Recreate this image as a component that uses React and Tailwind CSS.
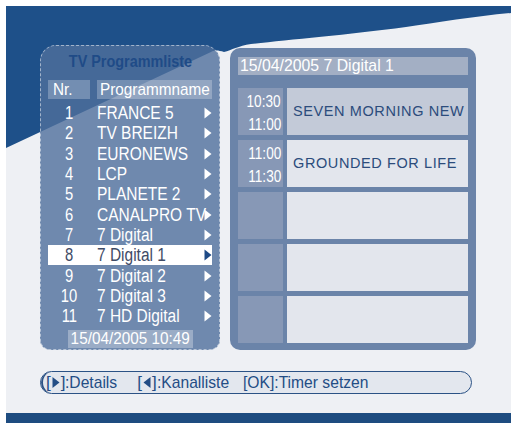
import React from 'react';

const channels = [
  'FRANCE 5', 'TV BREIZH', 'EURONEWS', 'LCP', 'PLANETE 2', 'CANALPRO TV',
  '7 Digital', '7 Digital 1', '7 Digital 2', '7 Digital 3', '7 HD Digital',
];

const events = [
  { from: '10:30', to: '11:00', title: 'SEVEN MORNING NEW', active: true },
  { from: '11:00', to: '11:30', title: 'GROUNDED FOR LIFE' },
  {}, {}, {},
];

// the box font is a narrow grotesk, so squeeze Liberation Sans horizontally
const Sq = ({ s = 'scale-x-[0.86]', o = 'origin-left', children }) => (
  <span className={`inline-block whitespace-nowrap ${s} ${o}`}>{children}</span>
);

const Tri = ({ dir = 'right', className }) => (
  <svg viewBox="0 0 8 12" className={className}>
    {dir === 'right'
      ? <path d="M0.5 0.5 L7.5 6 L0.5 11.5 Z" fill="currentColor" />
      : <path d="M7.5 0.5 L0.5 6 L7.5 11.5 Z" fill="currentColor" />}
  </svg>
);

const ChannelList = () => (
  <div className="w-[180px] h-[305px] shrink-0 flex flex-col bg-[#4f6f9c]/80 border border-dashed border-white/50 rounded-t-[16px] rounded-b-[10px] px-[7px]">
    <div className="h-[27px] pt-[6px] flex justify-center text-[16px] font-bold leading-[20px] text-[#1f4b87]">
      <Sq s="scale-x-[0.9]" o="origin-center">TV Programmliste</Sq>
    </div>
    <div className="flex gap-[7px] h-[19px] mt-[7px] text-[17px] leading-[19px] text-white">
      <div className="w-[42px] bg-white/25 pl-[5px]"><Sq s="scale-x-[0.9]">Nr.</Sq></div>
      <div className="w-[115px] bg-white/25 pl-[3px]"><Sq s="scale-x-[0.9]">Programmname</Sq></div>
    </div>
    <div className="mt-[4px]">
      {channels.map((name, i) => {
        const sel = i === 7;
        return (
          <div
            key={name}
            className={`flex items-center h-[20.3px] text-[18px] leading-[20px] ${sel ? 'bg-white text-[#3f4b66]' : 'text-white'}`}
          >
            <div className="w-[42px] shrink-0 flex justify-center">
              <Sq s="scale-x-[0.82]" o="origin-center">{i + 1}</Sq>
            </div>
            <div className="ml-[7px] w-[107px] shrink-0">
              <Sq>{name}</Sq>
            </div>
            <Tri className={`w-[8px] h-[12px] shrink-0 ${sel ? 'text-[#1e4a86]' : 'text-white'}`} />
          </div>
        );
      })}
    </div>
    <div className="mt-[4px] ml-[20px] w-[125px] h-[18px] bg-white/30 text-white text-[17px] leading-[18px] flex justify-center">
      <Sq s="scale-x-[0.9]" o="origin-center">15/04/2005 10:49</Sq>
    </div>
  </div>
);

const Schedule = () => (
  <div className="w-[246px] h-[302px] mt-[3px] shrink-0 bg-[#6b84a9] rounded-[10px] px-[8px] pt-[9px] pb-[7px] flex flex-col">
    <div className="h-[18px] bg-[#a3afc4] text-white text-[17px] leading-[18px] pl-[2px]">
      <Sq s="scale-x-[0.93]">15/04/2005 7 Digital 1</Sq>
    </div>
    <div className="mt-[13px] flex flex-col gap-[5px]">
      {events.map((ev, i) => (
        <div key={i} className="flex gap-[4px] h-[47px]">
          <div className="w-[45px] bg-[#8798b6] flex flex-col items-end justify-between pr-[2px] pt-[5px] pb-[1px] text-white text-[17px] leading-[18px]">
            <Sq s="scale-x-[0.8]" o="origin-right">{ev.from}</Sq>
            <Sq s="scale-x-[0.8]" o="origin-right">{ev.to}</Sq>
          </div>
          <div
            className={`w-[181px] flex items-center pl-[6px] text-[14.5px] tracking-[0.6px] text-[#2c4c7c] ${ev.active ? 'bg-[#c3cad8]' : 'bg-[#e3e6ed]'}`}
          >
            {ev.title}
          </div>
        </div>
      ))}
    </div>
  </div>
);

const Footer = () => (
  <div className="mt-[21px] w-[432px] h-[23px] rounded-full border-[1.5px] border-[#2b5285] bg-[#e3e7ee] shadow-[inset_3px_0_0_-1px_#2b5285] flex items-center pl-[5px] text-[17px] text-[#234d85] leading-[20px] whitespace-nowrap">
    <span className="flex items-center">
      [<Tri className="w-[8px] h-[13px] mx-[1px]" />]<Sq s="scale-x-[0.92]">:Details</Sq>
    </span>
    <span className="flex items-center ml-[15px]">
      [<Tri dir="left" className="w-[8px] h-[13px] mx-[1px]" />]<Sq s="scale-x-[0.92]">:Kanalliste</Sq>
    </span>
    <span className="ml-[8px]">
      <Sq s="scale-x-[0.92]">[OK]:Timer setzen</Sq>
    </span>
  </div>
);

export default function App() {
  return (
    <div className="w-[515px] h-[423px] bg-white pl-[6px] pt-[6px] pr-[4px] overflow-hidden font-['Liberation_Sans',sans-serif]">
      <div className="relative w-full h-full bg-[#eef0f4] flex flex-col">
        <svg className="absolute inset-0 w-full h-full" viewBox="0 0 505 417" preserveAspectRatio="none">
          <path
            d="M0 0 H505 V7 C470 10 430 17 400 21 C340 29 280 34 245 38 C232 40 226 44 218 46 C212 44 208 44 205 46 L0 142 Z"
            fill="#1e5089"
          />
        </svg>
        <div className="relative flex flex-col pl-[34px] pt-[39px]">
          <div className="flex items-start gap-[10px]">
            <ChannelList />
            <Schedule />
          </div>
          <Footer />
        </div>
        <div className="relative mt-auto h-[10px] bg-[#1e4c80]" />
      </div>
    </div>
  );
}
